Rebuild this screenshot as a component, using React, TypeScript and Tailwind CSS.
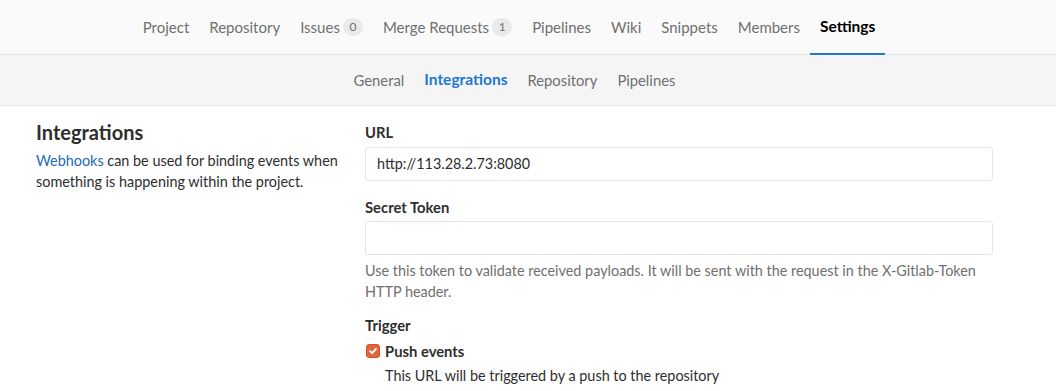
import React from 'react';

const topNav = [
  { label: 'Project' },
  { label: 'Repository' },
  { label: 'Issues', badge: '0' },
  { label: 'Merge Requests', badge: '1' },
  { label: 'Pipelines' },
  { label: 'Wiki' },
  { label: 'Snippets' },
  { label: 'Members' },
  { label: 'Settings', active: true },
];

const subNav = [
  { label: 'General' },
  { label: 'Integrations', active: true },
  { label: 'Repository' },
  { label: 'Pipelines' },
];

const App: React.FC = () => {
  return (
    <div className="min-h-screen bg-white text-[14.4px] text-[#2e2e2e] font-['Lato','Liberation_Sans',sans-serif]">
      {/* Project nav */}
      <nav className="h-[55px] bg-[#fafafa] border-b border-[#e5e5e5] flex justify-center pr-[38px]">
        {topNav.map((item) => (
          <a
            key={item.label}
            className={`relative flex items-center px-[10px] h-full ${
              item.active ? 'font-bold text-black text-[15.5px]' : 'text-[#707070] text-[15px]'
            }`}
          >
            {item.label}
            {item.badge && (
              <span className="ml-[3px] inline-flex items-center justify-center h-[18px] min-w-[20px] px-[6px] rounded-full bg-[#eaeaea] text-[12px] text-[#707070]">
                {item.badge}
              </span>
            )}
            {item.active && <span className="absolute left-0 right-0 -bottom-px h-[2px] bg-[#1f78d1]" />}
          </a>
        ))}
      </nav>

      {/* Settings sub nav */}
      <nav className="h-[51px] bg-[#f5f5f5] border-b border-[#e5e5e5] flex justify-center pr-[27px]">
        {subNav.map((item) => (
          <a
            key={item.label}
            className={`flex items-center px-[10px] h-full ${
              item.active ? 'font-bold text-[#1f78d1] text-[15.5px]' : 'text-[#707070] text-[14.8px]'
            }`}
          >
            {item.label}
          </a>
        ))}
      </nav>

      {/* Content */}
      <div className="flex pt-4 pl-[36px]">
        <div className="w-[329px] pr-3">
          <h4 className="-mt-[2px] text-[20px] font-bold leading-[24px]">Integrations</h4>
          <p className="mt-[6px] leading-[21px]">
            <a className="text-[#1b69b6]">Webhooks</a> can be used for binding events when something is
            happening within the project.
          </p>
        </div>

        <div className="w-[628px]">
          <label className="block font-bold text-[14.8px] leading-[20px]">URL</label>
          <div className="mt-[5px] h-[34px] border border-[#e5e5e5] rounded-[3px] px-[11px] flex items-center">
            http://113.28.2.73:8080
          </div>

          <label className="block font-bold text-[14.8px] leading-[20px] mt-4">Secret Token</label>
          <div className="mt-1 h-[34px] border border-[#e5e5e5] rounded-[3px]" />
          <p className="mt-[5px] leading-[21px] text-[#707070]">
            Use this token to validate received payloads. It will be sent with the request in the X-Gitlab-Token
            HTTP header.
          </p>

          <label className="block font-bold text-[14.8px] leading-[20px] mt-[13px]">Trigger</label>
          <div className="mt-[6px] flex items-center h-[20px]">
            <span className="w-[14px] h-[14px] rounded-[3px] bg-[#e2683c] border border-[#c9562d] flex items-center justify-center ml-px">
              <svg viewBox="0 0 12 12" className="w-[10px] h-[10px]">
                <path d="M2.5 6.2 L5 8.6 L9.6 3.4" fill="none" stroke="white" strokeWidth="2.2" strokeLinecap="round" strokeLinejoin="round" />
              </svg>
            </span>
            <span className="ml-[5px] font-bold text-[14.8px]">Push events</span>
          </div>
          <p className="mt-[5px] pl-[20px] leading-[20px]">This URL will be triggered by a push to the repository</p>
        </div>
      </div>
    </div>
  );
};

export default App;
